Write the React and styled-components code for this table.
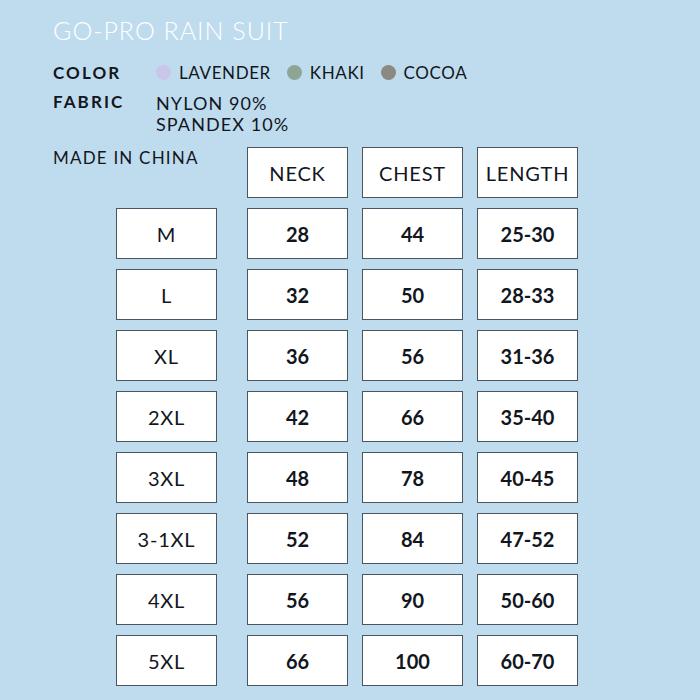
import React from 'react';
import styled, { createGlobalStyle } from 'styled-components';

const GlobalStyle = createGlobalStyle`
  body {
    margin: 0;
    font-family: Lato, "Open Sans", sans-serif;
  }
`;

const sizes = [
  { size: 'M', neck: '28', chest: '44', length: '25-30' },
  { size: 'L', neck: '32', chest: '50', length: '28-33' },
  { size: 'XL', neck: '36', chest: '56', length: '31-36' },
  { size: '2XL', neck: '42', chest: '66', length: '35-40' },
  { size: '3XL', neck: '48', chest: '78', length: '40-45' },
  { size: '3-1XL', neck: '52', chest: '84', length: '47-52' },
  { size: '4XL', neck: '56', chest: '90', length: '50-60' },
  { size: '5XL', neck: '66', chest: '100', length: '60-70' },
];

const colors = [
  { name: 'LAVENDER', swatch: '#c9c6ea' },
  { name: 'KHAKI', swatch: '#8ea596' },
  { name: 'COCOA', swatch: '#8c8882' },
];

export default function App() {
  return (
    <>
      <GlobalStyle />
      <Page>
        <Title>GO-PRO RAIN SUIT</Title>
        <Specs>
          <Label>COLOR</Label>
          <ColorList>
            {colors.map(c => (
              <ColorItem key={c.name}>
                <Dot color={c.swatch} />
                {c.name}
              </ColorItem>
            ))}
          </ColorList>
          <Label>FABRIC</Label>
          <Fabric>
            <div>NYLON 90%</div>
            <div>SPANDEX 10%</div>
          </Fabric>
        </Specs>
        <Table>
          <Origin>MADE IN CHINA</Origin>
          <Cell>NECK</Cell>
          <Cell>CHEST</Cell>
          <Cell>LENGTH</Cell>
          {sizes.map(row => (
            <React.Fragment key={row.size}>
              <SizeCell>{row.size}</SizeCell>
              <Cell bold>{row.neck}</Cell>
              <Cell bold>{row.chest}</Cell>
              <Cell bold>{row.length}</Cell>
            </React.Fragment>
          ))}
        </Table>
      </Page>
    </>
  );
}

const Page = styled.div`
  width: 700px;
  height: 700px;
  box-sizing: border-box;
  padding: 16px 0 0 53px;
  background: #bfdcee;
  color: #12161d;
  overflow: hidden;
`;

const Title = styled.h1`
  margin: 0;
  font-size: 25px;
  font-weight: 300;
  line-height: 28px;
  color: #ffffff;
  letter-spacing: 1px;
`;

const Specs = styled.div`
  display: grid;
  grid-template-columns: 103px auto;
  row-gap: 8px;
  margin-top: 18px;
`;

const Label = styled.div`
  font-size: 17px;
  font-weight: 700;
  letter-spacing: 2.1px;
  line-height: 21px;
`;

const ColorList = styled.div`
  display: flex;
  align-items: center;
  gap: 16px;
`;

const ColorItem = styled.div`
  display: flex;
  align-items: center;
  gap: 8px;
  font-size: 17px;
  line-height: 21px;
  letter-spacing: 0.6px;
`;

const Dot = styled.span`
  width: 15px;
  height: 15px;
  border-radius: 50%;
  background: ${p => p.color};
`;

const Fabric = styled.div`
  font-size: 18px;
  line-height: 21px;
  padding-top: 2px;
  letter-spacing: 1.1px;
`;

const Table = styled.div`
  display: grid;
  grid-template-columns: 180px repeat(3, 101px);
  grid-auto-rows: 51px;
  column-gap: 14px;
  row-gap: 10px;
  margin-top: 12px;
`;

const Origin = styled.div`
  font-size: 17px;
  line-height: 21px;
  letter-spacing: 1.2px;
`;

const Cell = styled.div`
  display: flex;
  align-items: center;
  justify-content: center;
  box-sizing: border-box;
  background: #ffffff;
  border: 1px solid #4a5560;
  font-size: 20px;
  font-weight: ${p => (p.bold ? 700 : 400)};
  letter-spacing: ${p => (p.bold ? '0' : '0.8px')};
`;

const SizeCell = styled(Cell)`
  width: 101px;
  justify-self: end;
  margin-right: 16px;
`;
